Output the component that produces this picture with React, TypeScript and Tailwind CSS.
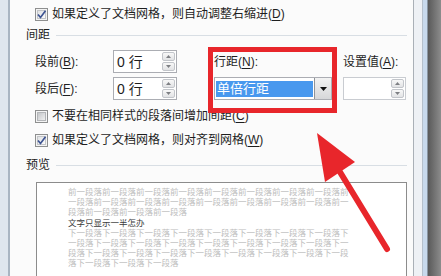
import React from "react";

const U = ({ children }: { children: React.ReactNode }) => (
  <span className="underline underline-offset-[2px]">{children}</span>
);

function Check({ checked }: { checked?: boolean }) {
  return (
    <span className="relative flex h-[13px] w-[13px] shrink-0 items-center justify-center border border-[#8e8f8f] bg-[#f4f4f4]">
      <span
        className={
          checked
            ? "h-[9px] w-[9px] border border-[#c3c5c8] bg-gradient-to-br from-[#dfe1e4] to-[#fbfbfb]"
            : "h-[9px] w-[9px] border border-[#b3b5b8] bg-gradient-to-br from-[#c4c6c9] to-[#f0f0f0]"
        }
      />
      {checked && (
        <svg className="absolute inset-0" width="11" height="11" viewBox="0 0 11 11">
          <path d="M2 5.5 L4.5 8.5 L9.5 1.8" fill="none" stroke="#3d5391" strokeWidth="1.7" />
        </svg>
      )}
    </span>
  );
}

function Spinner() {
  return (
    <div className="mr-[1px] flex flex-col gap-px">
      {[0, 1].map((i) => (
        <div
          key={i}
          className="flex h-[9px] w-[13px] items-center justify-center rounded-[2px] border border-[#c2c5ca] bg-gradient-to-b from-[#f8f8f8] to-[#e2e3e5]"
        >
          <svg width="5" height="3" viewBox="0 0 5 3">
            <path d={i === 0 ? "M0 3 L2.5 0 L5 3Z" : "M0 0 L2.5 3 L5 0Z"} fill="#7d7f83" />
          </svg>
        </div>
      ))}
    </div>
  );
}

function SpinBox({ value, light }: { value: string; light?: boolean }) {
  return (
    <div
      className={
        light
          ? "flex h-[23px] w-[63px] items-center justify-between border border-[#c9ccd1] bg-white"
          : "flex h-[23px] w-[64px] items-center justify-between border border-[#abadb3] bg-white"
      }
    >
      <span className="pl-[3px] text-[14px] leading-none">{value}</span>
      <Spinner />
    </div>
  );
}

function CheckRow({ checked, children, h }: { checked?: boolean; children: React.ReactNode; h: string }) {
  return (
    <div className={`flex items-center gap-[4px] pl-[25px] ${h}`}>
      <Check checked={checked} />
      <span className="whitespace-nowrap">{children}</span>
    </div>
  );
}

function Heading({ label }: { label: string }) {
  return (
    <div className="flex h-[14px] items-center pl-[16px] pr-[6px]">
      <span>{label}</span>
      <div className="ml-[6px] h-px flex-1 bg-[#d8dee4]" />
    </div>
  );
}

const before = "前一段落".repeat(30);
const after = "下一段落".repeat(30);
const beforeLines = [before.slice(0, 33), before.slice(33, 66), before.slice(66, 80)];
const afterLines = [after.slice(0, 33), after.slice(33, 66), after.slice(66, 99), after.slice(99, 112)];

export default function App() {
  return (
    <div className="flex h-[276px] w-[441px] overflow-hidden bg-[#fbfbfb] text-[12px] text-[#1e1e1e] [font-family:'Liberation_Sans','Noto_Sans_CJK_SC',sans-serif]">
      {/* left window frame */}
      <div className="w-[8px] shrink-0 bg-[#dfe6ee]" />
      <div className="w-[2px] shrink-0 bg-[#a9b5c2]" />

      <main className="relative w-[403px] shrink-0">
        <CheckRow checked h="h-[28px]">
          如果定义了文档网格，则自动调整右缩进(<U>D</U>)
        </CheckRow>

        <Heading label="间距" />

        <div className="mt-[8px] grid grid-cols-[78px_101px_129px_63px] grid-rows-[23px_23px] gap-y-[4px] pl-[25px]">
          <div className="flex items-center">
            段前(<U>B</U>):
          </div>
          <SpinBox value="0 行" />
          <div className="flex items-center">
            行距(<U>N</U>):
          </div>
          <div className="flex items-center">
            设置值(<U>A</U>):
          </div>

          <div className="flex items-center">
            段后(<U>F</U>):
          </div>
          <SpinBox value="0 行" />
          <div className="flex h-[23px] w-[118px] border border-[#abadb3] bg-white">
            <div className="flex flex-1 items-center pl-px">
              <div className="flex h-[16px] flex-1 items-center bg-[#4898ee] pl-[1px] text-[13px] leading-none text-white">
                单倍行距
              </div>
            </div>
            <div className="ml-px flex w-[17px] items-center justify-center border-l border-[#8f9399] bg-gradient-to-b from-[#f3f3f3] to-[#d6d7d9]">
              <svg width="7" height="4" viewBox="0 0 7 4">
                <path d="M0 0 L3.5 4 L7 0Z" fill="#111" />
              </svg>
            </div>
          </div>
          <SpinBox value="" light />
        </div>

        <CheckRow h="mt-[4px] h-[24px]">
          不要在相同样式的段落间增加间距(<U>C</U>)
        </CheckRow>
        <CheckRow checked h="h-[24px]">
          如果定义了文档网格，则对齐到网格(<U>W</U>)
        </CheckRow>

        <div className="mt-[6px]">
          <Heading label="预览" />
        </div>

        <div className="ml-[26px] mt-[10px] h-[120px] w-[371px] border border-[#8c8c8c] bg-white pl-[31px] pt-[4px] text-[8.5px] leading-[10px]">
          {beforeLines.map((l, i) => (
            <div key={i} className="h-[10px] whitespace-nowrap text-[#bdbdbd]">
              {l}
            </div>
          ))}
          <div className="mt-px h-[10px] whitespace-nowrap text-[#3a3a3a]">文字只显示一半怎办</div>
          {afterLines.map((l, i) => (
            <div key={i} className="h-[10px] whitespace-nowrap text-[#bdbdbd]">
              {l}
            </div>
          ))}
        </div>

        {/* red annotation box */}
        <div className="pointer-events-none absolute left-[198px] top-[47px] h-[66px] w-[129px] border-[5px] border-[#e8262b]" />

        {/* red annotation arrow */}
        <svg className="pointer-events-none absolute left-0 top-0" width="403" height="276" viewBox="0 0 403 276">
          <line x1="330" y1="172" x2="377" y2="249" stroke="#e8262b" strokeWidth="6" strokeLinecap="round" />
          <polygon points="307,133 345,162 315,182" fill="#e8262b" />
        </svg>
      </main>

      {/* right window frame */}
      <div className="flex flex-1">
        <div className="w-px bg-[#aab0b7]" />
        <div className="w-[8px] bg-[#eef1f5]" />
        <div className="w-px bg-[#b5c0cc]" />
        <div className="w-[4px] bg-[#c8d9ec]" />
        <div className="w-px bg-[#8a96a3]" />
        <div className="flex-1 bg-gradient-to-r from-[#5a5a5a] to-[#8c8c8c]" />
      </div>
    </div>
  );
}
